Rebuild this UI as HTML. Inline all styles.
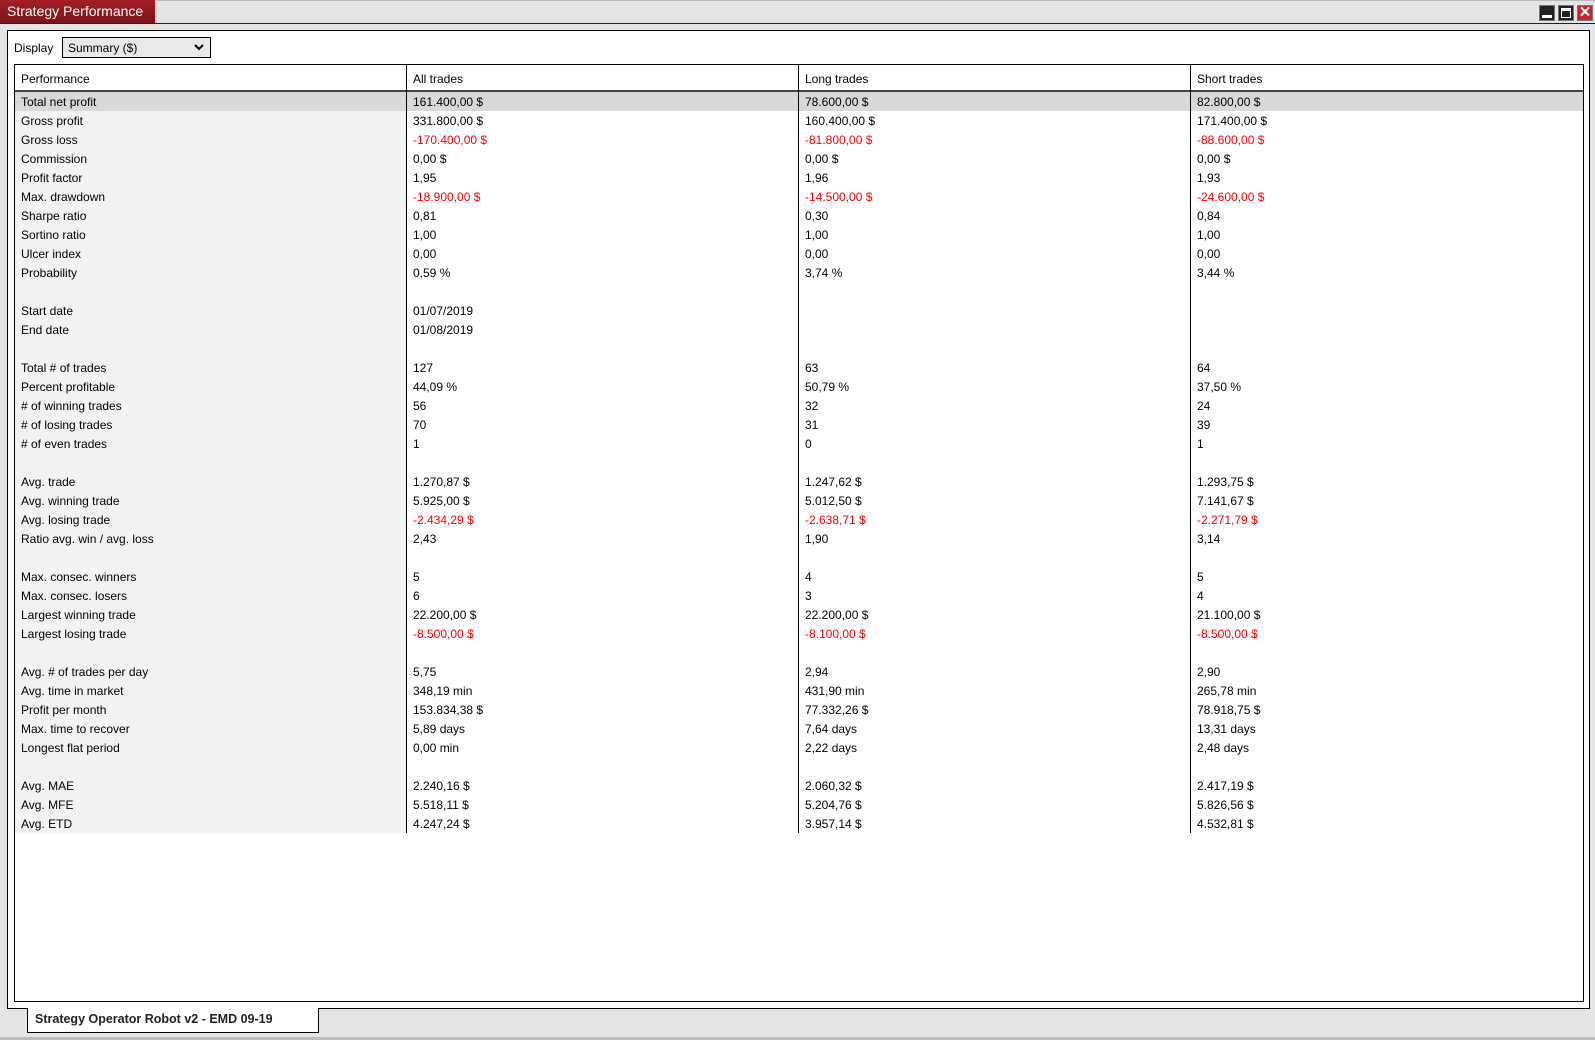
<!DOCTYPE html>
<html><head><meta charset="utf-8"><style>
*{margin:0;padding:0;box-sizing:border-box}
body{width:1595px;height:1040px;background:#e4e5e7;font-family:"Liberation Sans",Arial,sans-serif;font-size:12px;color:#000;position:relative;overflow:hidden}
.abs{position:absolute}
#topline{left:0;top:0;width:1595px;height:1px;background:#b8b8b8}
#tab{left:0;top:0;width:157px;height:23px;background:linear-gradient(#a11f24,#7a1419);color:#fff;font-size:14px;line-height:23px;padding-left:7px;border-right:2px solid #c9c9c9}
#hline{left:0;top:23px;width:1595px;height:1px;background:#222}
.btn{top:5px;width:16px;height:16px;border:1px solid #777;background:#222}
#panel{left:7px;top:30px;width:1583px;height:979px;background:#fff;border:1px solid #000}
#disp{left:14px;top:41px}
#sel{left:62px;top:37px;width:149px;height:21px;border:1px solid #000;background:#e9e9e9;padding-left:5px;line-height:20px}
#box{left:14px;top:64px;width:1570px;height:938px;border:1px solid #000;background:#fff}
.row{position:absolute;left:15px;width:1568px;height:19px;line-height:21px}
.c{position:absolute;top:0;height:19px;padding-left:6px;white-space:nowrap;overflow:hidden}
.c0{left:0;width:391px;background:#f1f2f2}
.c1{left:392px;width:392px}.c2{left:784px;width:392px}.c3{left:1176px;width:392px}
.r{color:#f00}
.vl{position:absolute;top:65px;width:1px;height:768px;background:#000}
#hdr{top:65px;background:#fff;height:27px;line-height:29px;border-bottom:2px solid #444}
#hdr .c{height:25px;background:#fff}
#btab{left:27px;top:1008px;width:292px;height:25px;background:#fff;border:1px solid #000;border-top:none;font-size:12.5px;font-weight:bold;line-height:23px;padding-left:7px;color:#222}
#bot{left:0;top:1037px;width:1595px;height:3px;background:#bdbdbd}
</style></head><body>
<div class="abs" id="topline"></div>
<div class="abs" id="tab">Strategy Performance</div>
<div class="abs" id="hline"></div>
<div class="abs btn" style="left:1539px"><div style="position:absolute;left:2px;top:9px;width:10px;height:3px;background:#fff"></div></div>
<div class="abs btn" style="left:1558px"><div style="position:absolute;left:2px;top:2px;width:10px;height:10px;border:1px solid #fff;border-top-width:3px"></div></div>
<div class="abs btn" style="left:1577px;background:#c9252b;color:#fff;font-weight:bold;font-size:15px;line-height:14px;text-align:center">✕</div>
<div class="abs" id="panel"></div>
<div class="abs" id="disp">Display</div>
<div class="abs" id="sel">Summary ($)<svg style="position:absolute;right:6px;top:6px" width="10" height="7" viewBox="0 0 10 7"><path d="M1 1L5 5L9 1" stroke="#000" stroke-width="2" fill="none"/></svg></div>
<div class="abs" id="box"></div>
<div class="row" id="hdr"><div class="c c0">Performance</div><div class="c c1">All trades</div><div class="c c2">Long trades</div><div class="c c3">Short trades</div></div>
<div style="position:absolute;left:0;top:0">
<div class="row" style="top:92px;background:#d8d8d8"><div class="c c0" style="background:#d8d8d8">Total net profit</div><div class="c c1">161.400,00 $</div><div class="c c2">78.600,00 $</div><div class="c c3">82.800,00 $</div></div>
<div class="row" style="top:111px"><div class="c c0">Gross profit</div><div class="c c1">331.800,00 $</div><div class="c c2">160.400,00 $</div><div class="c c3">171.400,00 $</div></div>
<div class="row" style="top:130px"><div class="c c0">Gross loss</div><div class="c c1 r">-170.400,00 $</div><div class="c c2 r">-81.800,00 $</div><div class="c c3 r">-88.600,00 $</div></div>
<div class="row" style="top:149px"><div class="c c0">Commission</div><div class="c c1">0,00 $</div><div class="c c2">0,00 $</div><div class="c c3">0,00 $</div></div>
<div class="row" style="top:168px"><div class="c c0">Profit factor</div><div class="c c1">1,95</div><div class="c c2">1,96</div><div class="c c3">1,93</div></div>
<div class="row" style="top:187px"><div class="c c0">Max. drawdown</div><div class="c c1 r">-18.900,00 $</div><div class="c c2 r">-14.500,00 $</div><div class="c c3 r">-24.600,00 $</div></div>
<div class="row" style="top:206px"><div class="c c0">Sharpe ratio</div><div class="c c1">0,81</div><div class="c c2">0,30</div><div class="c c3">0,84</div></div>
<div class="row" style="top:225px"><div class="c c0">Sortino ratio</div><div class="c c1">1,00</div><div class="c c2">1,00</div><div class="c c3">1,00</div></div>
<div class="row" style="top:244px"><div class="c c0">Ulcer index</div><div class="c c1">0,00</div><div class="c c2">0,00</div><div class="c c3">0,00</div></div>
<div class="row" style="top:263px"><div class="c c0">Probability</div><div class="c c1">0,59 %</div><div class="c c2">3,74 %</div><div class="c c3">3,44 %</div></div>
<div class="row" style="top:282px"><div class="c c0"></div></div>
<div class="row" style="top:301px"><div class="c c0">Start date</div><div class="c c1">01/07/2019</div></div>
<div class="row" style="top:320px"><div class="c c0">End date</div><div class="c c1">01/08/2019</div></div>
<div class="row" style="top:339px"><div class="c c0"></div></div>
<div class="row" style="top:358px"><div class="c c0">Total # of trades</div><div class="c c1">127</div><div class="c c2">63</div><div class="c c3">64</div></div>
<div class="row" style="top:377px"><div class="c c0">Percent profitable</div><div class="c c1">44,09 %</div><div class="c c2">50,79 %</div><div class="c c3">37,50 %</div></div>
<div class="row" style="top:396px"><div class="c c0"># of winning trades</div><div class="c c1">56</div><div class="c c2">32</div><div class="c c3">24</div></div>
<div class="row" style="top:415px"><div class="c c0"># of losing trades</div><div class="c c1">70</div><div class="c c2">31</div><div class="c c3">39</div></div>
<div class="row" style="top:434px"><div class="c c0"># of even trades</div><div class="c c1">1</div><div class="c c2">0</div><div class="c c3">1</div></div>
<div class="row" style="top:453px"><div class="c c0"></div></div>
<div class="row" style="top:472px"><div class="c c0">Avg. trade</div><div class="c c1">1.270,87 $</div><div class="c c2">1.247,62 $</div><div class="c c3">1.293,75 $</div></div>
<div class="row" style="top:491px"><div class="c c0">Avg. winning trade</div><div class="c c1">5.925,00 $</div><div class="c c2">5.012,50 $</div><div class="c c3">7.141,67 $</div></div>
<div class="row" style="top:510px"><div class="c c0">Avg. losing trade</div><div class="c c1 r">-2.434,29 $</div><div class="c c2 r">-2.638,71 $</div><div class="c c3 r">-2.271,79 $</div></div>
<div class="row" style="top:529px"><div class="c c0">Ratio avg. win / avg. loss</div><div class="c c1">2,43</div><div class="c c2">1,90</div><div class="c c3">3,14</div></div>
<div class="row" style="top:548px"><div class="c c0"></div></div>
<div class="row" style="top:567px"><div class="c c0">Max. consec. winners</div><div class="c c1">5</div><div class="c c2">4</div><div class="c c3">5</div></div>
<div class="row" style="top:586px"><div class="c c0">Max. consec. losers</div><div class="c c1">6</div><div class="c c2">3</div><div class="c c3">4</div></div>
<div class="row" style="top:605px"><div class="c c0">Largest winning trade</div><div class="c c1">22.200,00 $</div><div class="c c2">22.200,00 $</div><div class="c c3">21.100,00 $</div></div>
<div class="row" style="top:624px"><div class="c c0">Largest losing trade</div><div class="c c1 r">-8.500,00 $</div><div class="c c2 r">-8.100,00 $</div><div class="c c3 r">-8.500,00 $</div></div>
<div class="row" style="top:643px"><div class="c c0"></div></div>
<div class="row" style="top:662px"><div class="c c0">Avg. # of trades per day</div><div class="c c1">5,75</div><div class="c c2">2,94</div><div class="c c3">2,90</div></div>
<div class="row" style="top:681px"><div class="c c0">Avg. time in market</div><div class="c c1">348,19 min</div><div class="c c2">431,90 min</div><div class="c c3">265,78 min</div></div>
<div class="row" style="top:700px"><div class="c c0">Profit per month</div><div class="c c1">153.834,38 $</div><div class="c c2">77.332,26 $</div><div class="c c3">78.918,75 $</div></div>
<div class="row" style="top:719px"><div class="c c0">Max. time to recover</div><div class="c c1">5,89 days</div><div class="c c2">7,64 days</div><div class="c c3">13,31 days</div></div>
<div class="row" style="top:738px"><div class="c c0">Longest flat period</div><div class="c c1">0,00 min</div><div class="c c2">2,22 days</div><div class="c c3">2,48 days</div></div>
<div class="row" style="top:757px"><div class="c c0"></div></div>
<div class="row" style="top:776px"><div class="c c0">Avg. MAE</div><div class="c c1">2.240,16 $</div><div class="c c2">2.060,32 $</div><div class="c c3">2.417,19 $</div></div>
<div class="row" style="top:795px"><div class="c c0">Avg. MFE</div><div class="c c1">5.518,11 $</div><div class="c c2">5.204,76 $</div><div class="c c3">5.826,56 $</div></div>
<div class="row" style="top:814px"><div class="c c0">Avg. ETD</div><div class="c c1">4.247,24 $</div><div class="c c2">3.957,14 $</div><div class="c c3">4.532,81 $</div></div>
</div>
<div class="vl" style="left:406px"></div><div class="vl" style="left:798px"></div><div class="vl" style="left:1190px"></div>
<div class="abs" id="btab">Strategy Operator Robot v2 - EMD 09-19</div>
<div class="abs" id="bot"></div>
</body></html>
